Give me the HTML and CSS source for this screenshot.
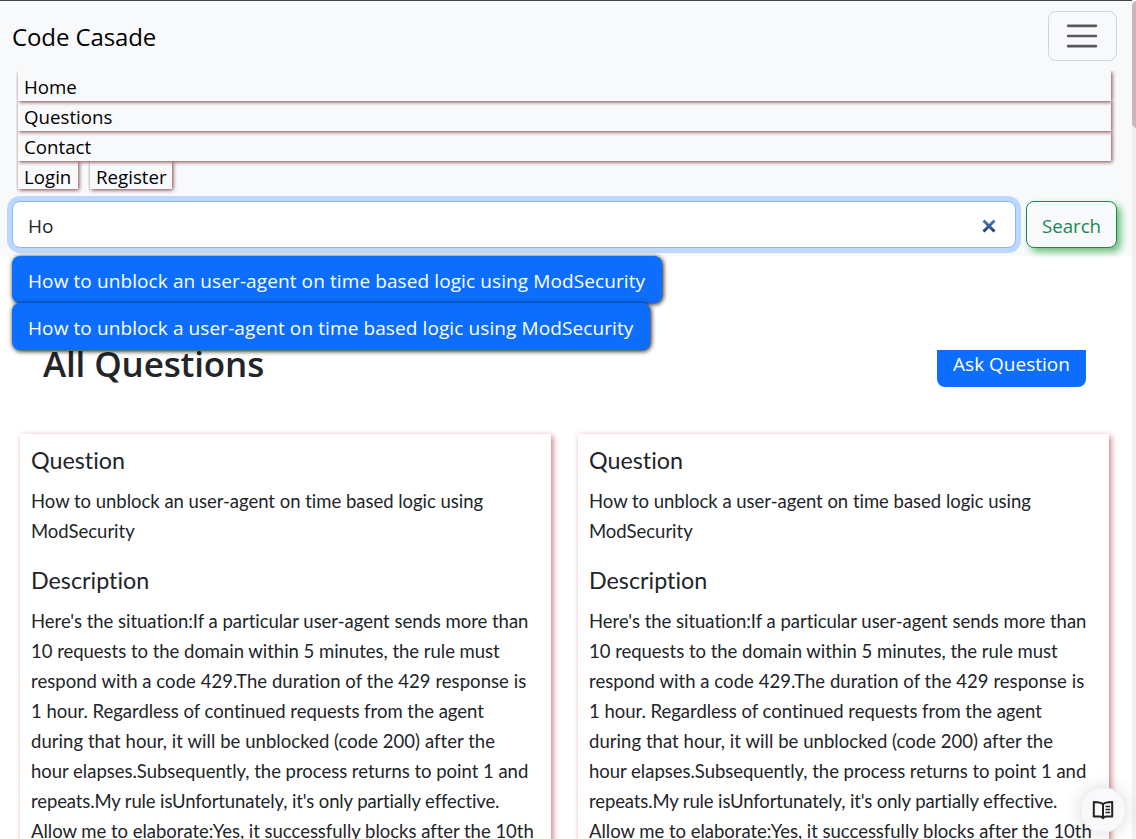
FILE: index.html
```html
<!DOCTYPE html>
<html lang="en">
<head>
<meta charset="utf-8">
<title>Code Casade</title>
<link rel="stylesheet" href="styles.css">
</head>
<body>
<header class="header">
  <nav class="navbar">
    <div class="bar">
      <a class="brand">Code Casade</a>
      <button class="toggler" aria-label="Menu">
        <svg width="38" height="38" viewBox="0 0 30 30"><path d="M4 7h22M4 15h22M4 23h22" stroke="#58595d" stroke-width="2" stroke-linecap="round" fill="none"/></svg>
      </button>
    </div>
    <div class="links">
      <a class="link">Home</a>
      <a class="link">Questions</a>
      <a class="link">Contact</a>
    </div>
    <div class="account">
      <a class="link small"><span class="login">Login</span></a>
      <a class="link small"><span class="register">Register</span></a>
    </div>
    <form class="search">
      <div class="field"><span>Ho</span>
        <svg class="clear" width="14" height="14" viewBox="0 0 14 14"><defs><linearGradient id="g" gradientUnits="userSpaceOnUse" x1="0" y1="0" x2="0" y2="14"><stop offset="0" stop-color="#4a86d8"/><stop offset="1" stop-color="#1d3568"/></linearGradient></defs><path d="M1.5 1.5l11 11M12.5 1.5l-11 11" stroke="url(#g)" stroke-width="3" fill="none"/></svg>
      </div>
      <button class="search-btn" type="button">Search</button>
    </form>
  </nav>
  <div class="suggestions">
    <a class="suggestion first">How to unblock an user-agent on time based logic using ModSecurity</a>
    <a class="suggestion second">How to unblock a user-agent on time based logic using ModSecurity</a>
  </div>
</header>
<main class="main">
  <div class="title-row">
    <h1 class="title">All Questions</h1>
    <button class="ask">Ask Question</button>
  </div>
  <div class="cards">
    <article class="card">
      <h2 class="label">Question</h2>
      <p class="text">How to unblock an user-agent on time based logic using<br>ModSecurity</p>
      <h2 class="label desc">Description</h2>
      <p class="text">Here's the situation:If a particular user-agent sends more than<br>10 requests to the domain within 5 minutes, the rule must<br><span class="wide">respond with a code 429.The duration of the 429 response is</span><br>1 hour. Regardless of continued requests from the agent<br><span class="wide">during that hour, it will be unblocked (code 200) after the</span><br>hour elapses.Subsequently, the process returns to point 1 and<br><span class="tight">repeats.My rule isUnfortunately, it's only partially effective.</span><br>Allow me to elaborate:Yes, it successfully blocks after the 10th</p>
    </article>
    <article class="card">
      <h2 class="label">Question</h2>
      <p class="text">How to unblock a user-agent on time based logic using<br>ModSecurity</p>
      <h2 class="label desc">Description</h2>
      <p class="text">Here's the situation:If a particular user-agent sends more than<br>10 requests to the domain within 5 minutes, the rule must<br><span class="wide">respond with a code 429.The duration of the 429 response is</span><br>1 hour. Regardless of continued requests from the agent<br><span class="wide">during that hour, it will be unblocked (code 200) after the</span><br>hour elapses.Subsequently, the process returns to point 1 and<br><span class="tight">repeats.My rule isUnfortunately, it's only partially effective.</span><br>Allow me to elaborate:Yes, it successfully blocks after the 10th</p>
    </article>
  </div>
</main>
<div class="track"><div class="thumb"></div></div>
<button class="reader" aria-label="Reader">
  <svg width="24" height="24" viewBox="0 0 24 24" fill="none" stroke="#222" stroke-width="2" stroke-linejoin="round"><path d="M12 6.2C10.5 4.6 8 4 2.800 4V18.500H8.500C10.500 18.500 11.500 19 12 20.300C12.500 19 13.500 18.500 15.500 18.500H21.200V4C16 4 13.500 4.600 12 6.200V20"/><path d="M14.500 8.500h4.500M14.500 11.500h4.500M14.500 14.500h4.500" stroke-width="1.500"/></svg>
</button>
</body>
</html>
```
FILE: styles.css
```css
* { box-sizing: border-box; }
body { margin: 0; height: 839px; overflow: hidden; background: #fff; color: #212529; font: 19px/30px "Open Sans", "Noto Sans", sans-serif; }
h1, h2, p { margin: 0; font-weight: 400; }
button { font: inherit; cursor: pointer; }
.header { position: absolute; top: 0; left: 0; width: 1132px; height: 350px; background: #fff; border-top: 1px solid #45464b; z-index: 2; }
.navbar { height: 255px; padding: 10px 15px 0 12px; background: #f8f9fb; }
.bar { display: flex; justify-content: space-between; align-items: center; height: 50px; }
.brand { color: #000; font-size: 24px; letter-spacing: -.1px; padding-top: 2px; }
.toggler { width: 69px; height: 50px; border: 1px solid #d3d5d9; border-radius: 8px; background: transparent; padding: 0 1px 0 0; display: flex; align-items: center; justify-content: center; }
.links { padding: 10px 6px 0; height: 100px; }
.link { display: block; height: 30px; padding-left: 6px; line-height: 32px; color: #000; box-shadow: 1px 1px 4px #7b3d40; clip-path: inset(0 -5px -5px -2px); font-size: 18.700px; }
.account { display: flex; gap: 12px; padding-left: 6px; height: 30px; }
.link.small { height: 28px; padding: 0 6px; line-height: 32px; }
.login { display: block; width: 48px; }
.register { display: block; width: 70px; }
.search { display: flex; gap: 10px; height: 47px; margin-top: 10px; }
.field { flex: 1; display: flex; justify-content: space-between; align-items: center; padding: 2px 19px 0 15px; border: 1px solid #86b7fe; border-radius: 8px; background: #fff; box-shadow: 0 0 0 5px #bed7fc; }
.search-btn { width: 91px; padding: 2px 0 0; border: 1px solid #198754; border-radius: 8px; background: #f8f9fb; color: #198754; box-shadow: 4px 4px 7px #6cc07a; font-size: 18.700px; }
.suggestions { display: flex; flex-direction: column; align-items: flex-start; padding-left: 12px; }
.suggestion { height: 47px; padding-left: 16px; line-height: 51px; border-radius: 8px; background: #0d6efd; color: #fff; box-shadow: 1px 1px 5px #000; white-space: nowrap; letter-spacing: .1px; }
.first { width: 650px; }
.second { width: 638px; }
.main { width: 1132px; padding-top: 340px; }
.title-row { display: flex; justify-content: space-between; padding: 0 46px 0 43px; height: 94px; }
.title { font-size: 35px; font-weight: 600; line-height: 48px; letter-spacing: -.150px; }
.ask { width: 149px; height: 47px; border: 0; border-radius: 8px; background: #0d6efd; color: #fff; padding: 0; }
.cards { display: grid; grid-template-columns: 531px 531px; gap: 27px; padding-left: 20px; }
.card { height: 440px; padding: 11px 11px; background: #fff; box-shadow: 2px 2px 6px #c98086; font-family: Lato, sans-serif; font-variant-ligatures: none; }
.label { font-size: 23.300px; line-height: 30px; margin-bottom: 11px; }
.desc { margin-top: 19px; }
.text { font-size: 18.500px; letter-spacing: -.020px; white-space: nowrap; }
.wide { letter-spacing: .050px; }
.tight { letter-spacing: -.120px; }
.track { position: absolute; left: 1132px; top: 1px; width: 4px; height: 838px; background: #f1f1f1; overflow: hidden; z-index: 3; }
.thumb { width: 10px; height: 127px; background: #c8b6b9; border-radius: 5px; }
.reader { position: absolute; left: 1080px; top: 787px; width: 46px; height: 46px; padding: 0; border: 1px solid #ececf2; border-radius: 50%; background: #f9f9fb; box-shadow: 0 0 18px rgba(0,0,0,.14); display: flex; align-items: center; justify-content: center; z-index: 3; }
```
